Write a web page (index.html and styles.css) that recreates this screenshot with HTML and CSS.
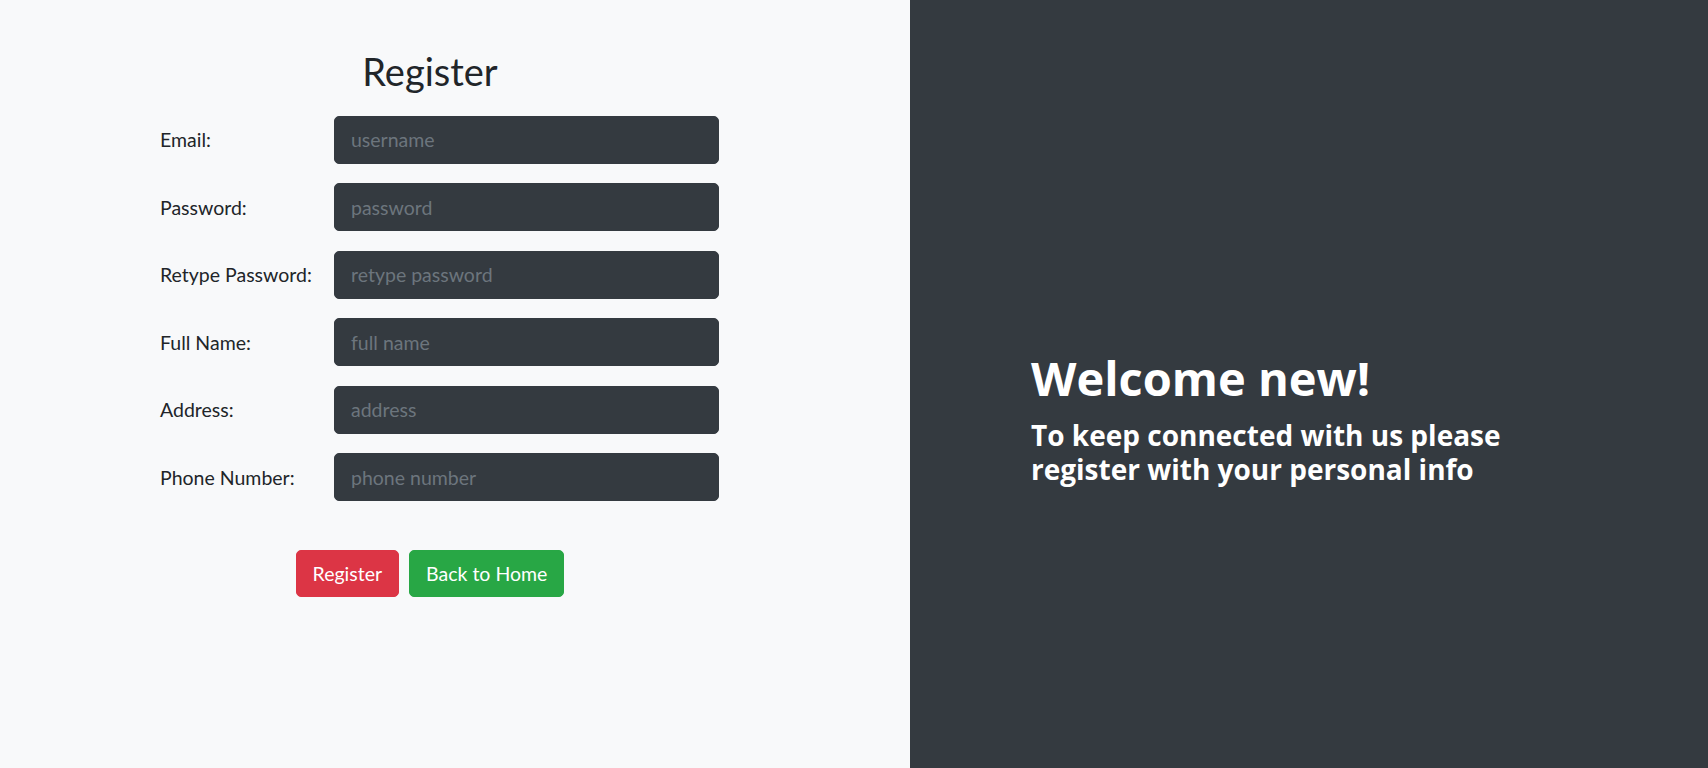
FILE: index.html
```html
<!DOCTYPE html>
<html lang="en">
<head>
<meta charset="utf-8">
<title>Register</title>
<link rel="stylesheet" href="styles.css">
</head>
<body>
<div class="page">
  <section class="left">
    <div class="wrap">
      <h1 class="title">Register</h1>
      <form class="form">
        <div class="row">
          <label class="label" for="email">Email:</label>
          <input class="input" id="email" type="text" placeholder="username">
        </div>
        <div class="row">
          <label class="label" for="pw">Password:</label>
          <input class="input" id="pw" type="password" placeholder="password">
        </div>
        <div class="row">
          <label class="label" for="pw2">Retype Password:</label>
          <input class="input" id="pw2" type="password" placeholder="retype password">
        </div>
        <div class="row">
          <label class="label" for="name">Full Name:</label>
          <input class="input" id="name" type="text" placeholder="full name">
        </div>
        <div class="row">
          <label class="label" for="addr">Address:</label>
          <input class="input" id="addr" type="text" placeholder="address">
        </div>
        <div class="row">
          <label class="label" for="phone">Phone Number:</label>
          <input class="input" id="phone" type="text" placeholder="phone number">
        </div>
        <div class="actions">
          <button class="btn btn-red" type="button">Register</button>
          <button class="btn btn-green" type="button">Back to Home</button>
        </div>
      </form>
    </div>
  </section>
  <section class="right">
    <div class="welcome">
      <h1 class="welcome-title">Welcome new!</h1>
      <h3 class="welcome-sub">To keep connected with us please register with your personal info</h3>
    </div>
  </section>
</div>
</body>
</html>
```
FILE: styles.css
```css
* { box-sizing: border-box; }
html, body { margin: 0; padding: 0; height: 100%; }
body {
  font-family: "Lato", "Liberation Sans", sans-serif;
  color: #212529;
  background: #f8f9fa;
}
.page {
  display: flex;
  height: 768px;
  overflow: hidden;
}
.left {
  width: 910px;
  flex: 0 0 910px;
  background: #f8f9fa;
  padding-top: 49px;
}
.wrap {
  width: 600px;
  margin-left: 130px;
}
.title {
  margin: 0 0 21px 0;
  font-size: 38px;
  font-weight: 400;
  line-height: 1.2;
  text-align: center;
  color: #212529;
}
.form { margin: 0; padding-left: 30px; }
.row {
  display: flex;
  align-items: center;
  height: 48px;
  margin-bottom: 19.5px;
}
.label {
  width: 174px;
  flex: 0 0 174px;
  font-size: 19.5px;
  color: #212529;
}
.input {
  width: 385px;
  height: 48px;
  padding: 8px 16px;
  font-family: "Lato", "Liberation Sans", sans-serif;
  font-size: 19.5px;
  color: #ffffff;
  background: #343a40;
  border: 1px solid #343a40;
  border-radius: 5px;
  outline: none;
}
.input::placeholder { color: #6c757d; opacity: 1; }
.actions {
  display: flex;
  justify-content: center;
  gap: 10px;
  margin-top: 49px;
  margin-left: -30px;
}
.btn {
  font-family: "Lato", "Liberation Sans", sans-serif;
  font-size: 19.5px;
  line-height: 29px;
  padding: 8px 16px;
  border: 1px solid transparent;
  border-radius: 5px;
  color: #ffffff;
  cursor: pointer;
}
.btn-red { background: #dc3545; border-color: #dc3545; }
.btn-green { background: #28a745; border-color: #28a745; }
.right {
  flex: 1 1 auto;
  background: #343a40;
  color: #ffffff;
  padding: 350px 0 0 121px;
}
.welcome { width: 480px; }
.welcome-title {
  margin: 0 0 12px 0;
  font-family: "Open Sans", "Liberation Sans", sans-serif;
  font-size: 47px;
  font-weight: 700;
  line-height: 1.2;
}
.welcome-sub {
  margin: 0;
  font-family: "Open Sans", "Liberation Sans", sans-serif;
  font-size: 28px;
  font-weight: 700;
  line-height: 34px;
}
```
